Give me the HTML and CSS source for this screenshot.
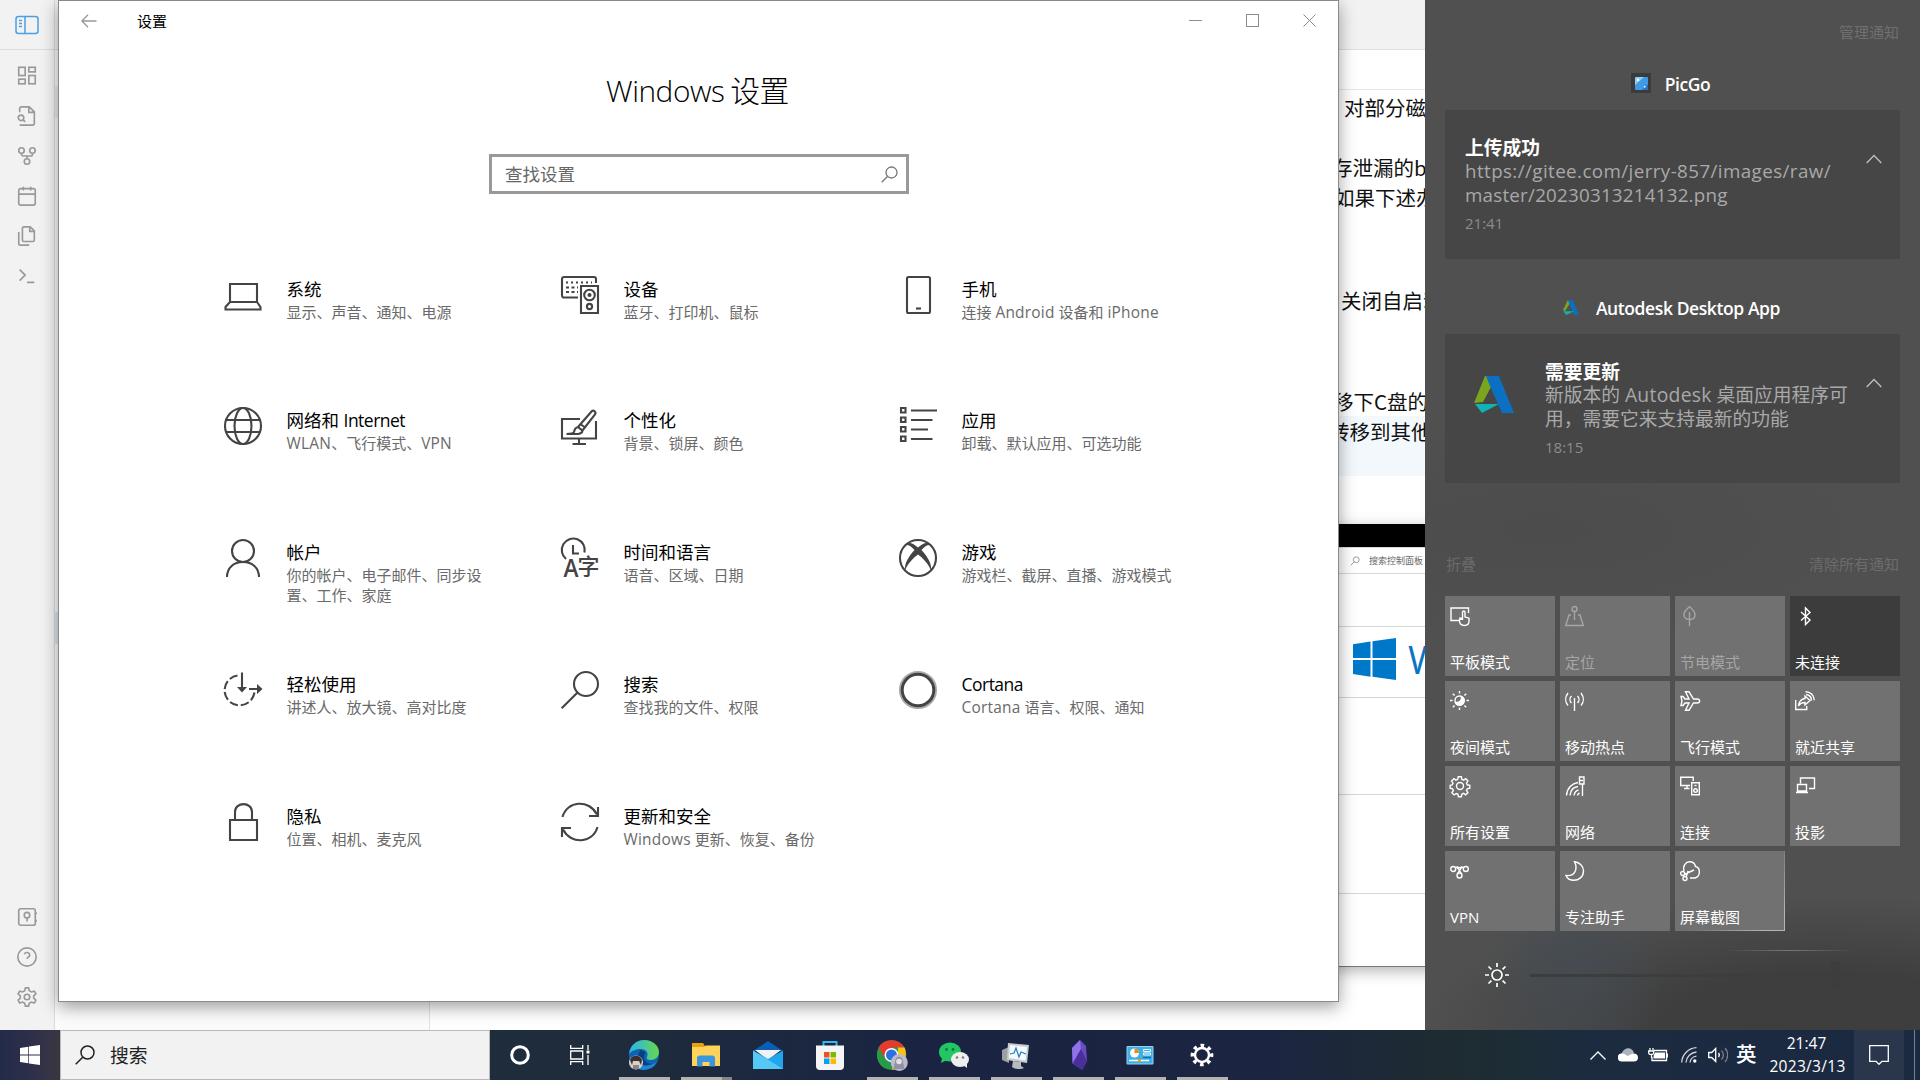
FILE: index.html
```html
<!DOCTYPE html>
<html lang="zh-CN">
<head>
<meta charset="utf-8">
<title>Windows 设置</title>
<link rel="stylesheet" href="styles.css">
</head>
<body>
<div class="desktop">

  <!-- Notes application behind everything -->
  <div class="notes">
    <nav class="ribbon">
      <div class="ribbon-head">
        <svg class="ico blue" viewBox="0 0 24 24" width="24" height="24"><rect x="1" y="3.500" width="22" height="17" rx="2.500"/><path d="M10 4v16M4 7.500h3M4 10.500h3M4 13.500h3"/></svg>
      </div>
      <div class="ribbon-list">
        <svg class="ico" viewBox="0 0 24 24"><rect x="3" y="2.500" width="7" height="9"/><rect x="14" y="2.500" width="7" height="5"/><rect x="14" y="11.500" width="7" height="9"/><rect x="3" y="15.500" width="7" height="5"/></svg>
        <svg class="ico" viewBox="0 0 24 24"><path d="M4 8V4a2 2 0 0 1 2-2h8.500L20 7.500V20a2 2 0 0 1-2 2H4M14 2v6h6"/><circle cx="5.500" cy="14" r="3"/><path d="M7.700 16.300 10 18.500"/></svg>
        <svg class="ico" viewBox="0 0 24 24"><circle cx="12" cy="18" r="3"/><circle cx="6" cy="6" r="3"/><circle cx="18" cy="6" r="3"/><path d="M18 9v1a2 2 0 0 1-2 2H8a2 2 0 0 1-2-2V9M12 12v3"/></svg>
        <svg class="ico" viewBox="0 0 24 24"><rect x="3" y="4" width="18" height="18" rx="2"/><path d="M16 2v4M8 2v4M3 10h18"/></svg>
        <svg class="ico" viewBox="0 0 24 24"><path d="M15.500 2H8.600A1.600 1.600 0 0 0 7 3.600v12.800c0 .9.700 1.600 1.600 1.600h9.800c.9 0 1.600-.7 1.600-1.600V6.500L15.500 2z"/><path d="M3 7.600v12.800c0 .9.700 1.600 1.600 1.600h9.800M15 2v5h5"/></svg>
        <svg class="ico" viewBox="0 0 24 24"><path d="m4 17 6-6-6-6M12 19h8"/></svg>
      </div>
      <div class="ribbon-list foot">
        <svg class="ico" viewBox="0 0 24 24"><rect x="3" y="3" width="18" height="18" rx="2"/><circle cx="12" cy="10" r="3"/><path d="M12 13v4M22 7v2M22 15v2"/></svg>
        <svg class="ico" viewBox="0 0 24 24"><circle cx="12" cy="12" r="10"/><path d="M9.100 9a3 3 0 0 1 5.800 1c0 2-3 2.500-3 4M12 17h.01"/></svg>
        <svg class="ico" viewBox="0 0 24 24"><circle cx="12" cy="12" r="3"/><path d="M9.500 5.200 10.300 2h3.400l.8 3.200 2.300 1.300L20 5.600l1.700 3-2.400 2.200v2.500l2.400 2.200-1.700 3-3.200-1-2.300 1.400-.8 3.100h-3.400l-.8-3.100-2.300-1.400-3.200 1-1.700-3 2.400-2.200v-2.500L2.300 8.600 4 5.600l3.200.9z"/></svg>
      </div>
    </nav>
    <aside class="files"><div class="files-head"></div><div class="files-row"></div><div class="files-row active"></div></aside>
    <main class="doc">
      <div class="doc-tabs"></div>
      <div class="doc-head"></div>
      <div class="doc-body">
        <p class="l1">对部分磁</p>
        <p class="l2">存泄漏的b</p>
        <p class="l3">如果下述办</p>
        <p class="l4">关闭自启动</p>
        <p class="l5">移下C盘的</p>
        <p class="l6">转移到其他</p>
      </div>
    </main>
  </div>

  <!-- System properties window -->
  <div class="sysprop">
    <div class="sp-title"></div>
    <div class="sp-search"><svg viewBox="0 0 12 12" width="10" height="10"><circle cx="7.500" cy="4.500" r="3.500"/><path d="M5 7 1 11"/></svg><span>搜索控制面板</span></div>
    <div class="sp-row h53"></div>
    <div class="sp-row h71 brand">
      <svg viewBox="0 0 43 42" width="43" height="42"><path fill="#0078ca" d="M0 6.200 17.500 3.600V20H0zM19.500 3.300 43 0v20H19.500zM0 22h17.500v16.700L0 36zM19.500 22H43v20l-23.500-3.300z"/></svg>
      <span>W</span>
    </div>
    <div class="sp-row h97"></div>
    <div class="sp-row h99"></div>
  </div>

  <!-- Settings window -->
  <section class="settings">
    <header class="titlebar">
      <svg class="back" viewBox="0 0 16 14" width="16" height="14"><path d="M15.500 7H1M7 .8.9 7 7 13.200"/></svg>
      <span class="tb-name">设置</span>
      <div class="caption">
        <svg viewBox="0 0 13 13"><path d="M0 6.500h13"/></svg>
        <svg viewBox="0 0 13 13"><rect x=".5" y=".5" width="12" height="12"/></svg>
        <svg viewBox="0 0 13 13"><path d="m.5.5 12 12M12.500.5l-12 12"/></svg>
      </div>
    </header>
    <h1>Windows 设置</h1>
    <div class="find"><span>查找设置</span><svg viewBox="0 0 17 17" width="17" height="17"><circle cx="10.500" cy="6.500" r="5.500"/><path d="M6.500 10.500.7 16.300"/></svg></div>
    <div class="grid">
      <div class="item">
        <svg viewBox="0 0 38 38"><path d="M6 8h27v18H6zM6 26l-4.500 5v2.500h35V31L33 26"/></svg>
        <div><h2>系统</h2><p>显示、声音、通知、电源</p></div>
      </div>
      <div class="item">
        <svg viewBox="0 0 38 38"><path d="M17 21.500H3A2 2 0 0 1 1 19.500V3A2 2 0 0 1 3 1h30a2 2 0 0 1 2 2v4"/><path stroke-dasharray="2 3" d="M5 6.500h26"/><path stroke-dasharray="3 2.500" d="M5 11.500h12M5 16h12"/><path d="M20 10h17v27H20z"/><circle cx="28.500" cy="19" r="5.300"/><circle cx="28.500" cy="19" r="1" fill="#444"/><circle cx="28.500" cy="30.500" r="2.600"/></svg>
        <div><h2>设备</h2><p>蓝牙、打印机、鼠标</p></div>
      </div>
      <div class="item">
        <svg viewBox="0 0 38 38"><rect x="8" y="1" width="23" height="36" rx="1.500"/><path d="M17 32.500h5"/></svg>
        <div><h2>手机</h2><p>连接 <i>Android</i> 设备和 <i>iPhone</i></p></div>
      </div>
      <div class="item">
        <svg viewBox="0 0 38 38"><circle cx="19" cy="19" r="18"/><ellipse cx="19" cy="19" rx="8.500" ry="18"/><path d="M2.200 13h33.600M2.200 25h33.600"/></svg>
        <div><h2>网络和 <i>Internet</i></h2><p><i>WLAN</i>、飞行模式、<i>VPN</i></p></div>
      </div>
      <div class="item">
        <svg viewBox="0 0 38 38"><path d="M19 12H1v19.500h34V14M18 31.500V37M11.500 37H25"/><path d="m17 20 13.500-15.500c2-2 5 .5 3.500 3L21.500 23.500zM20 17.500l4 3M17 20c-2.500.5-3.500 2.500-4 5-.3 1.500-4 2-7.500 2H17c3-.5 4.500-2 4.500-3.500"/></svg>
        <div><h2>个性化</h2><p>背景、锁屏、颜色</p></div>
      </div>
      <div class="item">
        <svg viewBox="0 0 38 38"><path d="M2 1h4.500v4.500H2zM2 10.500h4.500V15H2zM2 20h4.500v4.500H2zM2 29.500h4.500V34H2z"/><path d="M12 3.500h26M12 13h21.500M12 22.500h17M12 32h21.500"/></svg>
        <div><h2>应用</h2><p>卸载、默认应用、可选功能</p></div>
      </div>
      <div class="item">
        <svg viewBox="0 0 38 38"><circle cx="19" cy="12" r="11"/><path d="M3 38c0-9.500 7-15 16-15s16 5.500 16 15"/></svg>
        <div><h2>帐户</h2><p>你的帐户、电子邮件、同步设置、工作、家庭</p></div>
      </div>
      <div class="item">
        <svg viewBox="0 0 38 38"><path d="M5 20A11.500 11.500 0 1 1 23.500 13.500M12 6v8.500h6"/><text x="2.500" y="37.500" font-size="25" font-weight="600" textLength="15" lengthAdjust="spacingAndGlyphs">A</text><text x="16.500" y="34.500" font-size="22" font-weight="500">字</text></svg>
        <div><h2>时间和语言</h2><p>语音、区域、日期</p></div>
      </div>
      <div class="item">
        <svg viewBox="0 0 38 38"><circle cx="19" cy="19" r="18"/><path fill="#444" stroke="none" d="M8 4.500c3.500-1.500 7 .5 11 4 4-3.500 7.500-5.500 11-4l1.500 1.500c-3-.5-6 1.500-9 5 6 6.500 10.500 14 9.500 20.500C29.500 25 24 19 19 15.500 14 19 8.500 25 6 31.500 5 25 9.500 17.500 15.500 11c-3-3.500-6-5.500-9-5z"/></svg>
        <div><h2>游戏</h2><p>游戏栏、截屏、直播、游戏模式</p></div>
      </div>
      <div class="item">
        <svg viewBox="0 0 38 38"><path stroke-dasharray="8.500 3" d="M13.500 4.500A15 15 0 1 0 30.500 21"/><path d="M18 1.500V18M25 18h11"/><path fill="#444" stroke="none" d="M13 16h10l-5 5.500zM33 13l5.500 5-5.500 5z"/></svg>
        <div><h2>轻松使用</h2><p>讲述人、放大镜、高对比度</p></div>
      </div>
      <div class="item">
        <svg viewBox="0 0 38 38"><circle cx="25" cy="13" r="12"/><path d="M16.500 21.500.7 37.300"/></svg>
        <div><h2>搜索</h2><p>查找我的文件、权限</p></div>
      </div>
      <div class="item">
        <svg viewBox="0 0 38 38"><circle cx="19" cy="19" r="18" stroke="#aaa"/><circle cx="19" cy="19" r="15.800" stroke-width="3"/></svg>
        <div><h2><i>Cortana</i></h2><p><i>Cortana</i> 语言、权限、通知</p></div>
      </div>
      <div class="item">
        <svg viewBox="0 0 38 38"><path d="M6 17h27v20H6zM11 17V9c0-10.500 17-10.500 17 0v8"/></svg>
        <div><h2>隐私</h2><p>位置、相机、麦克风</p></div>
      </div>
      <div class="item">
        <svg viewBox="0 0 38 38"><path d="M1.500 14C6-2.500 28-4 36 11.500M36.500 24C32 40.500 10 42 2 26.500"/><path d="M37 4v9h-9M1 34v-9h9"/></svg>
        <div><h2>更新和安全</h2><p><i>Windows</i> 更新、恢复、备份</p></div>
      </div>
    </div>
  </section>

  <!-- Action center -->
  <aside class="center">
    <div class="manage">管理通知</div>
    <div class="app-head">
      <svg viewBox="0 0 20 20" width="20" height="20"><path fill="#3b3b3b" d="M0 0h20v20H0z"/><rect x="4" y="4" width="13" height="13" rx="1" fill="#3f9be6"/><path fill="#8fd0f7" d="M5 4h8L4 12V5z"/><path fill="#2f6fc4" d="M17 11v6h-6z"/><path fill="#fff" d="M6 6h2v2H6zM13 13h1.500v1.500H13z"/></svg>
      <b>PicGo</b>
    </div>
    <div class="card">
      <div class="msg"><strong>上传成功</strong><p class="url">https://gitee.com/jerry-857/images/raw/</p><p class="url-end">master/20230313214132.png</p><time>21:41</time></div>
      <svg class="chev" viewBox="0 0 16 10"><path d="M.7 9 8 1.500 15.300 9"/></svg>
    </div>
    <div class="app-head second">
      <svg viewBox="0 0 40 37" width="16" height="15"><path fill="#7aa51e" d="M12 0h7l-3 10L5 28l-5-3z"/><path fill="#0b6fc2" d="M12 0h12l16 37H28z"/><path fill="#0fb3b3" d="M1 28h27L8 37z"/></svg>
      <b>Autodesk Desktop App</b>
    </div>
    <div class="card">
      <svg class="adsk" viewBox="0 0 40 37" width="40" height="37"><path fill="#7aa51e" d="M11 0h8l-2 11L9 26l-9 1z"/><path fill="#0b6fc2" d="M12 0h13l15 37H28l-12-27z"/><path fill="#0fb3b3" d="M1 28h24L8 37z"/></svg>
      <div class="msg"><strong>需要更新</strong><p>新版本的 <i>Autodesk</i> 桌面应用程序可</p><p>用，需要它来支持最新的功能</p><time>18:15</time></div>
      <svg class="chev" viewBox="0 0 16 10"><path d="M.7 9 8 1.500 15.300 9"/></svg>
    </div>
    <div class="links"><span>折叠</span><span>清除所有通知</span></div>
    <div class="tiles">
      <div class="tile"><svg viewBox="0 0 20 20"><path d="M9 14.500H1V2h17.500v5"/><path d="M12.500 13V6.500c0-2 2.500-2 2.500 0V11l4 1.200V15c0 3-1.500 4.500-4.500 4.500-2.500 0-5-1.500-5-5l.5-2.500z"/></svg><span>平板模式</span></div>
      <div class="tile off"><svg viewBox="0 0 20 20"><circle cx="9.500" cy="3" r="2.500"/><path d="M9.500 5.500V14M6 9H4L.7 19.500h17.600L15 9h-2"/></svg><span>定位</span></div>
      <div class="tile off"><svg viewBox="0 0 20 20"><path d="M9.500 20V6M9.500.8C6 3.500 4 6 4 9c0 2.500 2 4.500 5.500 4.500S15 11.500 15 9c0-3-2-5.500-5.500-8.200z"/></svg><span>节电模式</span></div>
      <div class="tile dark"><svg viewBox="0 0 20 20"><path d="m6 6 9 8-4.500 4.500V2L15 6.500 6 14.500"/></svg><span>未连接</span></div>
      <div class="tile"><svg viewBox="0 0 20 20"><circle cx="9.500" cy="9.500" r="4.500"/><path fill="#fff" d="M5.500 11.500C10 12 12 9 11.500 5.500c5 3 2.500 9-2.500 8.500-2 0-3-1-3.500-2.500z"/><path d="M9.500 0v2.500M9.500 16.500V19M0 9.500h2.500M16.500 9.500H19M2.800 2.800l1.800 1.800M14.400 14.400l1.800 1.800M16.200 2.800l-1.800 1.800M4.600 14.400l-1.800 1.800"/></svg><span>夜间模式</span></div>
      <div class="tile"><svg viewBox="0 0 20 20"><path d="M9.500 7v13M6.500 5c-2 2-2 5 0 7M12.500 5c2 2 2 5 0 7M3 2c-3 4-3 9 0 12.500M16 2c3 4 3 9 0 12.500"/></svg><span>移动热点</span></div>
      <div class="tile"><svg viewBox="0 0 20 20"><path d="M1 5.500h2L5 8h4L5.500.7H9L13.500 8H17c3.500 0 3.500 4 0 4h-3.500L9 19.300H5.500L9 12H5l-2 2.500H1L2 10z"/></svg><span>飞行模式</span></div>
      <div class="tile"><svg viewBox="0 0 20 20"><path d="M.7 9v9.500h11V15M10 11.500c-3 0-5 1-6.500 3.500C4 10.500 6 8 10 7.500V5l5 4.500-5 4.500zM11 3.500c3.500.5 5.500 3 5.500 6M10.500.7c5 0 8.500 3.500 8.800 8.500"/></svg><span>就近共享</span></div>
      <div class="tile"><svg viewBox="0 0 20 20"><circle cx="10" cy="10" r="3.500"/><path d="m8.200.8-.5 2.500-1.800.8-2-1.400-2.300 2.400 1.400 2-.8 1.800-2 .4v3l2.400.5.8 1.700-1.500 2.200 2.200 2.200 2.200-1.400 1.700.8.400 2.400h3l.4-2.500 1.800-.8 2.100 1.500 2.200-2.300-1.400-2.100.8-1.700 2.500-.5v-3l-2.500-.5-.8-1.800 1.400-2.100-2.200-2.200-2.100 1.400-1.800-.8-.4-2.500z"/></svg><span>所有设置</span></div>
      <div class="tile"><svg viewBox="0 0 20 20"><path d="M1.500 19.500C2 12 7 7.500 13 6.500M5 19.500c.5-5 3.500-8.500 8-9M9 19.500c.5-3 2-5 4.500-5.500M12.500 19.500c.3-1.500 1-2 2-2.500M17.500 8v12M14.500 1H19v7h-4.500zM15 4.500h3"/></svg><span>网络</span></div>
      <div class="tile"><svg viewBox="0 0 20 20"><path d="M10 9.500H.7V1.200h12.500V5M7 9.500v3M4 12.500h5.500M11.700 6.700h7.600v12h-7.600z"/><circle cx="15.500" cy="14.500" r="1.800"/><path d="M14.500 9.500h2"/></svg><span>连接</span></div>
      <div class="tile"><svg viewBox="0 0 20 20"><path d="M5.500 7.500V2h14v10.500H14M2.500 8.500h9V15h-9zM1 16.500h12"/></svg><span>投影</span></div>
      <div class="tile"><svg viewBox="0 0 20 20"><circle cx="3.200" cy="8" r="2.500"/><circle cx="15.800" cy="8" r="2.500"/><circle cx="9.500" cy="14.500" r="2.500"/><path d="M5.500 7c2-3 4 4 6 5.500M13.500 7c-2-3-4 4-6 5.500M7 5.500c1.500 1.500 3.500 1.500 5 0"/></svg><span>VPN</span></div>
      <div class="tile"><svg viewBox="0 0 20 20"><path d="M9.500.8c5 .7 9 4.200 9 9.200 0 6-5 9.300-9.500 9.300-4 0-7-2-8-4.800C9 15.500 13.500 9 9.500.8z"/></svg><span>专注助手</span></div>
      <div class="tile hot"><svg viewBox="0 0 20 20"><path d="M4 10C2.500 4.500 6 .8 9.500.8S15 3 15.500 5.500c5 1 5.500 10-.5 11.500H10M4 13.500 14 9M6 16.500 8 10"/><circle cx="2.700" cy="12.500" r="2"/><circle cx="5" cy="17.500" r="2"/></svg><span>屏幕截图</span></div>
    </div>
    <div class="glow"></div>
    <div class="slider">
      <svg viewBox="0 0 24 24" width="24" height="24"><circle cx="12" cy="12" r="5"/><path d="M12 0v4M12 20v4M0 12h4M20 12h4M3.500 3.500l2.900 2.900M17.600 17.600l2.900 2.900M20.500 3.500l-2.900 2.900M6.400 17.600l-2.900 2.900"/></svg>
      <div class="track"></div><div class="thumb"></div>
    </div>
  </aside>

  <!-- Taskbar -->
  <footer class="taskbar">
    <div class="start"><svg viewBox="0 0 20 20" width="20" height="20"><path fill="#fff" d="M0 3l8.300-1.200v7.800H0zM9 1.600 20 0v9.600H9zM0 10.400h8.300v7.800L0 17zM9 10.400h11V20L9 18.400z"/></svg></div>
    <div class="search"><svg viewBox="0 0 20 20" width="20" height="20"><circle cx="12.500" cy="7.500" r="6.500"/><path d="M8 12 .7 19.300"/></svg><span>搜索</span></div>
    <div class="apps">
      <div class="app ring"><svg viewBox="0 0 20 20" width="20" height="20"><circle cx="10" cy="10" r="8.300" fill="none" stroke="#fff" stroke-width="3"/></svg></div>
      <div class="app"><svg viewBox="0 0 20 20" width="20" height="20"><path fill="none" stroke="#fff" stroke-width="1.300" d="M.7 0v3.300h12V0M.7 20v-3.300h12V20M.7 6h12v8H.7zM18 0v5M18 10v10"/><path fill="#fff" d="M16.500 5.500h3v3h-3z"/></svg></div>
      <div class="app run"><svg viewBox="0 0 30 30" width="30" height="30"><defs><linearGradient id="ea"><stop offset="0" stop-color="#2ab3ee"/><stop offset="1" stop-color="#64d84e"/></linearGradient></defs><circle cx="15" cy="15" r="15" fill="#0e63b5"/><path fill="url(#ea)" d="M0 14C1 5 8 0 15 0c9 0 15 6 15 12 0 5-4 8-8 8-3 0-5-1-4-3 2-4-1-8-6-8S2 11 0 14z"/><path fill="#093e82" d="M12 10c-4 3-4 12 3 16 5 3 11 1 13-3-5 2-12 1-13-5-.5-3 2-5 1-6z"/><path fill="#1d86d6" d="M28 22c-3 6-9 8-15 8-5-1-8-5-8-9 3 4 14 7 23 1z"/><circle cx="7" cy="22.500" r="7" fill="#d8d0c8"/><path fill="#3a3030" d="M1 20c1-5 10-6 12 0l-1 5-2-4H4l-1 4z"/><path fill="#888" d="M4 25h6v4H4z"/></svg></div>
      <div class="app run multi"><svg viewBox="0 0 30 30" width="30" height="30"><path fill="#e8a30c" d="M1 3h11l2 3v4H1z"/><path fill="#ffd25a" d="M1 7h12l2-1.500h14V26H1z"/><path fill="#3a96dd" d="M6 26.500V17l2-1.500h14l2 1.500v9.500h-5.500V22h-7v4.500z"/></svg></div>
      <div class="app"><svg viewBox="0 0 30 30" width="30" height="30"><path fill="#0a5eb5" d="M0 11 15 1l15 10z"/><path fill="#f2f2f2" d="M2 10h26L15 20z"/><path fill="#1fa6ee" d="M0 10.500 15 19l15-8.500V29H0z"/><path fill="#55c8f8" d="M0 10.500 30 29H0z"/></svg></div>
      <div class="app"><svg viewBox="0 0 30 30" width="30" height="30"><path fill="none" stroke="#33b8f0" stroke-width="2" d="M8.500 7V2h13v5"/><path fill="#f5f5f5" d="M1 5.500h28V26a4 4 0 0 1-4 4H5a4 4 0 0 1-4-4z"/><path fill="#f25022" d="M9 12h5.500v5.500H9z"/><path fill="#7fba00" d="M15.500 12H21v5.500h-5.500z"/><path fill="#00a4ef" d="M9 18.500h5.500V24H9z"/><path fill="#ffb900" d="M15.500 18.500H21V24h-5.500z"/></svg></div>
      <div class="app run"><svg viewBox="0 0 31 31" width="31" height="31"><circle cx="14.500" cy="15" r="14.800" fill="#2a9a48"/><path fill="#e33b2e" d="M1.500 7.500C4 3 9 .2 14.500.2S25 3 27.500 7.500H15L8 18z"/><path fill="#fbc116" d="M27.500 7.500c4 8-1 22-13 22.300L21 18V7.500z"/><circle cx="14.500" cy="15" r="7" fill="#fff"/><circle cx="14.500" cy="15" r="5.500" fill="#2f6fe0"/><circle cx="22.300" cy="22.500" r="8.500" fill="#b9bccb"/><path fill="#8f92a8" d="M18 22c0-7 8-7 8 0l1.500 7h-11z"/><circle cx="22" cy="21.500" r="2.800" fill="#e8dfe2"/></svg></div>
      <div class="app run"><svg viewBox="0 0 30 30" width="30" height="30"><ellipse cx="11" cy="12" rx="11" ry="9.500" fill="#22c765"/><path fill="#22c765" d="m3 18-1 5 6-3z"/><ellipse cx="21" cy="19.500" rx="9" ry="7.500" fill="#eee"/><path fill="#eee" d="m24 25 4 3v-5z"/><circle cx="7.500" cy="9.500" r="1.400" fill="#14783c"/><circle cx="14" cy="9.500" r="1.400" fill="#14783c"/><circle cx="18" cy="17.500" r="1.200" fill="#777"/><circle cx="24" cy="17.500" r="1.200" fill="#777"/></svg></div>
      <div class="app run"><svg viewBox="0 0 30 30" width="30" height="30"><path fill="#9aa0a4" d="m1 10 7-3v16l-7-3z"/><path fill="#c9cdd0" d="m7 3 21 2-2 18-20-3z"/><path fill="#f4fafd" d="m9 5 17 2-1.500 13.500L8 18z"/><path fill="none" stroke="#267db8" stroke-width="1.200" d="m9 14 4-1 2-5 3 9 2-5 5 2"/><path fill="#b8bcc0" d="m12 21 8 1v4l3 2c-3 1.500-9 1.500-12-1z"/></svg></div>
      <div class="app run"><svg viewBox="0 0 30 30" width="30" height="30"><path fill="#6a4bc4" d="m17 0 6 6 1 15-5 9-10-7 0-15z"/><path fill="#8f72e8" d="m17 0 1 9-8 14-1-15z"/><path fill="#4a2f9a" d="m18 9 6 12-5 9-9-7z"/></svg></div>
      <div class="app run"><svg viewBox="0 0 30 30" width="30" height="30"><rect x="1.500" y="6" width="27" height="18.500" rx="1" fill="#8fd4f5"/><path fill="#3fb0e6" d="M2.500 7h25v16.500h-25z"/><circle cx="9.500" cy="13" r="4.500" fill="#fff"/><path fill="#e88a1a" d="M9.500 8.500V13H14a4.500 4.500 0 0 0-4.500-4.500z"/><path fill="none" stroke="#e6f6fd" stroke-width="1" d="M18.500 9.500h7v2h-7zM18.500 13h7v2h-7z"/><path stroke="#0b6fb0" stroke-width="1.500" d="M18 17.500h8"/><path stroke="#fff" stroke-width="1.500" d="M4 20.500h20"/><path fill="#e8a01a" d="M13 19h3v3h-3z"/></svg></div>
      <div class="app run"><svg viewBox="0 0 24 24" width="24" height="24"><circle cx="12" cy="12" r="7" fill="none" stroke="#fff" stroke-width="2.400"/><circle cx="12" cy="12" r="9.600" fill="none" stroke="#fff" stroke-width="3.500" stroke-dasharray="3.500 4.040" transform="rotate(-10 12 12)"/></svg></div>
    </div>
    <div class="tray">
      <svg class="t-up" viewBox="0 0 16 9" width="16" height="9"><path d="M.5 8.500 8 1l7.500 7.500"/></svg>
      <svg class="t-cloud" viewBox="0 0 20 14" width="20" height="14"><path fill="#a9b2bd" stroke="none" d="M3 7C5-1 14-2 16 5l-7 4z"/><path fill="#fff" stroke="none" d="M4 13.500a4 4 0 0 1-.5-8c2-.3 4 .5 6 2.500l5-2.500c3-.5 5.500 1 5.500 4s-2 4-4 4z"/></svg>
      <svg class="t-batt" viewBox="0 0 20 14" width="20" height="14"><path d="M6 2.500h12.500v10H4V9M19.500 5.500v4M2 0v3M5 0v3M.7 3h5v2c0 2-5 2-5 0zM3.500 7v3"/><path fill="#fff" stroke="none" d="M7 4.500h10v6H5.500V8z"/></svg>
      <svg class="t-net" viewBox="0 0 16 16" width="16" height="16"><path opacity=".8" d="M.7 15.500C1 7.500 7.500 1 15.500.7M5 15.500C5.300 10 10 5.300 15.500 5M9 15.500c.3-3.300 3-6 6.500-6.300"/><circle cx="13.800" cy="14" r="1.700" fill="#fff" stroke="none"/></svg>
      <svg class="t-vol" viewBox="0 0 20 16" width="20" height="16"><path d="M.7 5.500h3l4-4v13l-4-4h-3z"/><path d="M10.500 6c1 1.200 1 2.800 0 4"/><path opacity=".4" d="M13.500 3.500c2.500 2.500 2.500 6.500 0 9M17 1c3.500 4 3.500 10 0 14"/></svg>
      <span class="ime">英</span>
      <div class="clock"><span>21:47</span><span class="date">2023/3/13</span></div>
      <div class="notify"><svg viewBox="0 0 20 20" width="20" height="20"><path d="M.7.7h18.600v15.600H13l-3 3-3-3H.7z"/></svg></div>
      <div class="peek"></div>
    </div>
  </footer>
</div>
</body>
</html>
```

FILE: styles.css
```css
* { box-sizing: border-box; }
html, body { margin: 0; padding: 0; }
body {
  font-family: "Open Sans", "Noto Sans CJK SC", sans-serif;
  overflow: hidden;
}
h1, h2, p { margin: 0; font-weight: 400; }
i { font-style: normal; }
h2 i { letter-spacing: -0.03em; }
p i { font-size: 1.03em; line-height: 1; letter-spacing: 0.015em; }
svg { display: block; flex: none; }

.desktop { position: relative; width: 1920px; height: 1080px; overflow: hidden; background: #fff; }

/* Notes application */
.notes { position: absolute; inset: 0 0 50px 0; display: flex; background: #fff; }
.ribbon { width: 55px; background: #f2f2f2; border-right: 1px solid #dcdcdc; display: flex; flex-direction: column; }
.ribbon-head { height: 50px; border-bottom: 1px solid #dcdcdc; display: flex; align-items: center; justify-content: center; }
.ribbon-list { display: flex; flex-direction: column; align-items: center; gap: 18px; padding-top: 14.5px; }
.ribbon-list.foot { margin-top: auto; padding: 0 0 22.5px; }
.ico { width: 22px; height: 22px; fill: none; stroke: #999; stroke-width: 1.8; }
.ico.blue { width: 24px; height: 24px; stroke: #4c9fe3; stroke-width: 1.5; }
.files { width: 375px; background: #fbfbfb; border-right: 1px solid #e0e0e0; display: flex; flex-direction: column; }
.files-head { height: 50px; background: #f2f2f2; border-bottom: 1px solid #dcdcdc; }
.files-row { height: 32px; margin-top: 36px; background: #ececec; }
.files-row.active { margin-top: 494px; background: #d6e8f5; }
.doc { flex: 1; display: flex; flex-direction: column; }
.doc-tabs { height: 50px; background: #f2f2f2; border-bottom: 1px solid #dfdfdf; }
.doc-head { height: 40px; border-bottom: 1px solid #e8e8e8; }
.doc-body { display: flex; flex-direction: column; font: 20.5px/30px "Noto Sans CJK SC", sans-serif; color: #111; white-space: nowrap; overflow: hidden; }
.doc-body p { height: 30px; padding-left: 902px; }
.doc-body .l1 { margin-top: 2px; padding-left: 914px; }
.doc-body .l2 { margin-top: 30px; }
.doc-body .l3 { padding-left: 904px; }
.doc-body .l4 { margin-top: 73px; padding-left: 911px; }
.doc-body .l5 { margin-top: 71px; padding-left: 903px; }
.doc-body .l6 { height: 60px; padding-left: 899px; background: #f3f8fd; }

/* System properties window */
.sysprop { position: absolute; left: 900px; top: 524px; width: 600px; height: 443px; background: #fff; border-bottom: 1px solid #777; box-shadow: 0 4px 14px rgba(0,0,0,.3); display: flex; flex-direction: column; }
.sp-title { height: 23px; background: #000; }
.sp-search { height: 27px; border: 1px solid #d9d9d9; padding-left: 449px; display: flex; align-items: center; gap: 9px; font: 9px "Noto Sans CJK SC", sans-serif; color: #666; }
.sp-search svg { fill: none; stroke: #888; }
.sp-row { border-bottom: 1px solid #d6d6d6; }
.h53 { height: 53px; }
.h71 { height: 71px; }
.h97 { height: 97px; }
.h99 { height: 99px; }
.brand { display: flex; align-items: center; gap: 12px; padding: 0 0 6px 453px; font-size: 38px; line-height: 48px; color: #0b74c4; white-space: nowrap; }

/* Settings window */
.settings { position: absolute; left: 58px; top: 0; width: 1281px; height: 1002px; background: #fff; border: 1px solid #8a8a8a; box-shadow: 0 5px 16px rgba(0,0,0,.38); display: flex; flex-direction: column; }
.titlebar { height: 40px; padding-left: 22px; display: flex; align-items: center; }
.back { fill: none; stroke: #999; stroke-width: 1.3; margin-top: -1px; }
.tb-name { margin-left: 40px; font-size: 15px; line-height: 20px; color: #000; }
.caption { margin: -1px 22.5px 0 auto; display: flex; gap: 44px; }
.caption svg { width: 13px; height: 13px; fill: none; stroke: #8c8c8c; }
.settings h1 { margin-top: 26px; height: 48px; line-height: 48px; text-align: center; font-size: 29.8px; font-weight: 300; letter-spacing: -0.45px; word-spacing: -1.5px; color: #000; padding-right: 2px; }
.find { width: 420px; height: 40px; margin: 39px 0 0 430px; padding: 0 8px 0 13px; border: 3px solid #999; display: flex; align-items: center; justify-content: space-between; font-size: 17.5px; line-height: 24px; color: #666; }
.find svg { fill: none; stroke: #777; stroke-width: 1.3; }
.grid { display: grid; grid-template-columns: repeat(3, 337px); grid-template-rows: 131px repeat(4, 132px); margin: 82px 0 0 165px; }
.item { display: flex; gap: 24.5px; align-items: flex-start; }
.item > svg { width: 38px; height: 38px; fill: none; stroke: #444; stroke-width: 2.1; overflow: visible; }
.item:nth-child(3n) > svg { margin-left: 1px; }
.item > svg text { fill: #444; stroke: none; font-family: "Open Sans", "Noto Sans CJK SC", sans-serif; }
.item > div { width: 212px; }
.item h2 { margin-top: 2px; font-size: 17.5px; line-height: 23px; color: #000; white-space: nowrap; }
.item p { font-size: 15px; line-height: 20px; margin-top: 1px; color: #6a6a6a; }

/* Action center */
.center { position: absolute; left: 1425px; top: 0; width: 495px; height: 1030px; padding: 0 20px; color: #fff; display: flex; flex-direction: column;
  background:
    radial-gradient(ellipse 90px 110px at 150px 970px, rgba(68,76,84,.8), transparent),
    radial-gradient(ellipse 400px 130px at 400px 1025px, #3e3e3e 40%, transparent),
    radial-gradient(ellipse 340px 110px at 120px 530px, rgba(72,72,72,.5), transparent),
    #505050; }
.manage { height: 20px; margin-top: 22px; line-height: 20px; padding-right: 1px; text-align: right; font-size: 15px; color: #6f6f6f; }
.app-head { height: 24px; margin-top: 30px; display: flex; align-items: center; justify-content: center; gap: 14px; font-size: 17.5px; line-height: 24px; letter-spacing: -0.4px; margin-left: -4px; }
.app-head svg { margin-top: -2px; }
.app-head.second { margin-top: 37px; margin-left: -2px; gap: 17px; }
.app-head b { font-weight: 600; }
.card { height: 149px; margin-top: 14px; padding: 26px 18px 0 20px; background: #464646; display: flex; align-items: flex-start; }
.msg { display: flex; flex-direction: column; }
.msg strong { font-size: 18.75px; line-height: 24px; height: 23px; }
.msg p { height: 24px; font-size: 18.75px; line-height: 24px; color: #a9a9a9; white-space: nowrap; }
.msg .url { letter-spacing: 0.42px; }
.msg .url-end { letter-spacing: 0.24px; }
.msg time { margin-top: 6px; font-size: 15px; line-height: 20px; color: #8c8c8c; }
.chev { width: 16px; height: 10px; margin: 18px 0 0 auto; fill: none; stroke: #c0c0c0; stroke-width: 1.3; }
.adsk { margin: 16px 31px 0 9px; }
.links { height: 24px; margin-top: 69px; padding: 0 1px; display: flex; justify-content: space-between; font-size: 15px; line-height: 24px; color: #6c6c6c; }
.tiles { margin-top: 20px; display: grid; grid-template-columns: repeat(4, 110px); grid-auto-rows: 80px; gap: 5px; }
.tile { padding: 10px 5px 4px; background: #717171; display: flex; flex-direction: column; justify-content: space-between; font-size: 15px; line-height: 20px; }
.tile svg { width: 20px; height: 20px; fill: none; stroke: #fff; stroke-width: 1.4; overflow: visible; }
.tile.off { color: #a6a6a6; }
.tile.off svg { stroke: #a6a6a6; }
.tile.dark { background: #3c3c3c; }
.tile.hot { padding: 10px 4px 3px 5px; border-style: solid; border-width: 0 1px 1px 0; border-image: linear-gradient(135deg, #717171 50%, #b5b5b5 90%) 1; }
.glow { height: 1px; width: 130px; margin: 19px 0 0 280px; background: linear-gradient(90deg, transparent, #777, transparent); }
.slider { height: 24px; margin: 12px 0 0 40px; display: flex; align-items: center; }
.slider svg { fill: none; stroke: #fff; stroke-width: 1.7; }
.track { width: 300px; height: 3px; margin-left: 21px; background: #3d3d3d; }
.thumb { width: 10px; height: 28px; border-radius: 5px; background: #3d3d3d; }

/* Taskbar */
.taskbar { position: absolute; left: 0; bottom: 0; width: 1920px; height: 50px; display: flex; color: #fff;
  background: linear-gradient(90deg, #20303c 0, #1e2c3c 32%, #1a2442 48%, #1b2541 66%, #1e2b31 75%, #1d2d36 79%, #1c2b40 83%, #1b2941 100%); }
.start { width: 60px; display: flex; align-items: center; padding-left: 20px; background: linear-gradient(90deg, #222b49, #30304a 60%, #3a3640); }
.search { width: 430px; background: #f2f2f2; border: 1px solid #b9b9b9; display: flex; align-items: center; gap: 15px; padding-left: 14px; font-size: 18.75px; color: #222; }
.search span { margin-top: -2px; }
.search svg { fill: none; stroke: #222; stroke-width: 1.5; }
.apps { display: flex; }
.app { width: 62px; height: 50px; display: flex; align-items: center; justify-content: center; }
.app.ring { width: 60px; }
.app:nth-child(2) { width: 63px; padding-right: 4px; }
.app.run { background: linear-gradient(#b3b3b3, #b3b3b3) 6px 47px / 51px 3px no-repeat; }
.app.multi { background-image: linear-gradient(90deg, #b3b3b3 41px, #858585 41px); }
.tray { margin-left: auto; display: flex; align-items: center; }
.tray svg { fill: none; stroke: #fff; stroke-width: 1.3; }
.t-cloud { margin-left: 12px; }
.t-batt { margin-left: 10px; }
.t-net { margin-left: 13px; }
.t-vol { margin-left: 11px; }
.ime { margin: -2px 0 0 8px; width: 21px; font-size: 20.5px; font-weight: 500; line-height: 24px; }
.clock { width: 94px; padding-left: 5px; display: flex; flex-direction: column; align-items: center; font-size: 15.5px; line-height: 23px; }
.date { letter-spacing: 0.3px; margin-right: -2px; }
.notify { width: 50px; height: 50px; margin-left: 3px; background: #2a364c; display: flex; align-items: center; justify-content: center; }
.peek { width: 6px; height: 50px; margin-left: 10px; border-left: 1px solid #7a8290; }
```
